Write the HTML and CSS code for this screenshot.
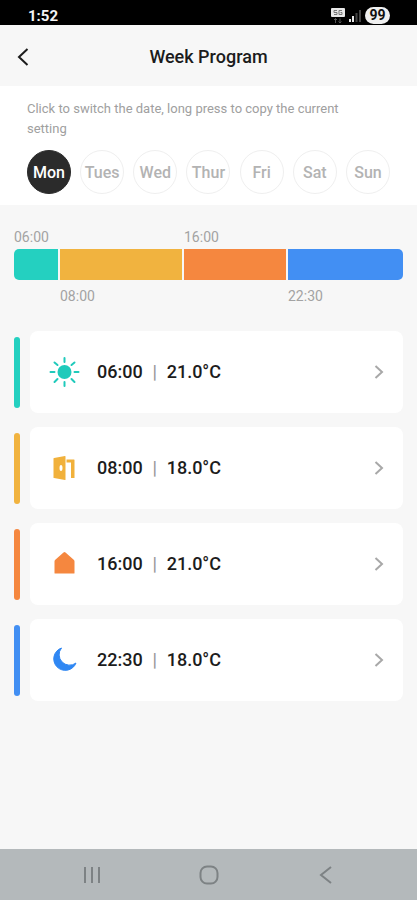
FILE: index.html
```
<!doctype html>
<html lang="en">
	<head>
		<title>Week Program</title>
		<meta charset="utf-8">
		<meta name="viewport" content="width=device-width, initial-scale=1.0">

		<link rel="stylesheet" href="styles.css">
	</head>

	<body>
		<div class="status">
			<span class="clock">1:52</span>
			<div class="status-icons">
				<svg class="network" width="14" height="16" viewBox="0 0 14 16">
					<rect x="0" y="0" width="14" height="9" rx="1" fill="#e8e8e8"/>
					<path d="M3 2.5h3M3 2.5v2h3v2H3M8 2.5v4h3v-2H9.500M8 2.500h3" fill="none" stroke="#777" stroke-width="1"/>
					<path d="M4.500 15v-4.500M3 12l1.500-1.500L6 12M9 10.500V15M7.500 13.500L9 15l1.500-1.500" fill="none" stroke="#555" stroke-width="1"/>
				</svg>
				<svg class="signal" width="12" height="12" viewBox="0 0 12 12">
					<path d="M0 9h2v3H0zM3 6h2v6H3z" fill="#e8e8e8"/>
					<path d="M6.500 3h2v9h-2zM10 0h2v12h-2z" fill="#444"/>
				</svg>
				<span class="battery">99</span>
			</div>
		</div>

		<header class="header">
			<button class="back" type="button" aria-label="Back">
				<svg width="12" height="20" viewBox="0 0 12 20"><path d="M10.500 2L2 10l8.500 8"/></svg>
			</button>
			<h1>Week Program</h1>
		</header>

		<section class="days">
			<p>Click to switch the date, long press to copy the current setting</p>
			<div class="day-list">
				<button class="day active" type="button">Mon</button>
				<button class="day" type="button">Tues</button>
				<button class="day" type="button">Wed</button>
				<button class="day" type="button">Thur</button>
				<button class="day" type="button">Fri</button>
				<button class="day" type="button">Sat</button>
				<button class="day" type="button">Sun</button>
			</div>
		</section>

		<main class="program">
			<div class="timeline">
				<span class="time">06:00</span>
				<span></span>
				<span class="time">16:00</span>
				<span></span>
				<div class="segment teal"></div>
				<div class="segment yellow"></div>
				<div class="segment orange"></div>
				<div class="segment blue"></div>
				<span></span>
				<span class="time">08:00</span>
				<span></span>
				<span class="time">22:30</span>
			</div>

			<div class="periods">
				<div class="period">
					<div class="marker teal"></div>
					<button class="card" type="button">
						<svg class="icon" width="32" height="32" viewBox="0 0 32 32">
							<circle cx="16.500" cy="16" r="7" fill="#1fcabb"/>
							<path d="M16.500 2v4M16.500 26v4M2.500 16h4M26.500 16h4M6.500 6.500l3 2.500M23.500 23l3 3M26.500 6.500l-3 2.500M9.500 23l-3 3" stroke="#1fcabb" stroke-width="2" stroke-linecap="round"/>
						</svg>
						<span class="from">06:00</span><span class="divider">|</span><span>21.0°C</span>
						<svg class="arrow" width="10" height="14" viewBox="0 0 10 14"><path d="M1.500 1l6.500 6-6.500 6"/></svg>
					</button>
				</div>
				<div class="period">
					<div class="marker yellow"></div>
					<button class="card" type="button">
						<svg class="icon" width="32" height="32" viewBox="0 0 32 32">
							<path fill-rule="evenodd" d="M6 6q-.500 0-.500.500v19q0 .500.500.500l11 2q.500 0 .500-.500V4.500q0-.500-.500-.500zM13 13q1.500 0 1.500 3t-1.500 3-1.500-3 1.500-3z" fill="#f1b13b"/>
							<path d="M18.500 7.500H26q.500 0 .500.500v18h-3.500V10.500h-4.500z" fill="#f1b13b"/>
						</svg>
						<span class="from">08:00</span><span class="divider">|</span><span>18.0°C</span>
						<svg class="arrow" width="10" height="14" viewBox="0 0 10 14"><path d="M1.500 1l6.500 6-6.500 6"/></svg>
					</button>
				</div>
				<div class="period">
					<div class="marker orange"></div>
					<button class="card" type="button">
						<svg class="icon" width="32" height="32" viewBox="0 0 32 32">
							<path d="M16.500 4q.500 0 1 .500l8.500 7.500q.500.500.500 1.500V25q0 .500-.500.500H7q-.500 0-.500-.500V13.500q0-1 .500-1.500l8.500-7.500q.500-.500 1-.500z" fill="#f5873f"/>
						</svg>
						<span class="from">16:00</span><span class="divider">|</span><span>21.0°C</span>
						<svg class="arrow" width="10" height="14" viewBox="0 0 10 14"><path d="M1.500 1l6.500 6-6.500 6"/></svg>
					</button>
				</div>
				<div class="period">
					<div class="marker blue"></div>
					<button class="card" type="button">
						<svg class="icon" width="32" height="32" viewBox="0 0 32 32">
							<path d="M13.500 4A11.500 11.500 0 1 0 28 19A10.500 10.500 0 0 1 13.500 4z" fill="#2f87f3" stroke="#2f87f3" stroke-width="1" stroke-linejoin="round"/>
						</svg>
						<span class="from">22:30</span><span class="divider">|</span><span>18.0°C</span>
						<svg class="arrow" width="10" height="14" viewBox="0 0 10 14"><path d="M1.500 1l6.500 6-6.500 6"/></svg>
					</button>
				</div>
			</div>
		</main>

		<nav class="navbar">
			<button type="button" aria-label="Recent apps">
				<svg width="18" height="18" viewBox="0 0 18 18"><path d="M2 1v16M9 1v16M16 1v16"/></svg>
			</button>
			<button type="button" aria-label="Home">
				<svg width="20" height="20" viewBox="0 0 20 20"><rect x="1.500" y="1.500" width="17" height="17" rx="6.500"/></svg>
			</button>
			<button type="button" aria-label="Back">
				<svg width="18" height="18" viewBox="0 0 18 18"><path d="M14 1L4 9l10 8"/></svg>
			</button>
		</nav>
	</body>
</html>
```
FILE: styles.css
```
* {
	box-sizing:border-box;
}

body {
	display:flex;
	flex-direction:column;
	min-height:100vh;
	margin:0;
	background:#f7f7f7;
	color:#1c1c1c;
	font-family:Roboto, "Liberation Sans", sans-serif;
}

button {
	padding:0;
	border:0;
	background:none;
	color:inherit;
	font-family:inherit;
	cursor:pointer;
}

svg {
	display:block;
	flex:none;
}

.status {
	display:flex;
	justify-content:space-between;
	align-items:flex-end;
	height:25px;
	padding:0 27px 0 28px;
	background:#000;
	color:#f4f4f4;
}

.clock {
	font-size:15px;
	font-weight:700;
	line-height:18px;
}

.status-icons {
	display:flex;
	align-items:center;
	gap:4px;
}

.battery {
	width:25px;
	margin-bottom:1px;
	border-radius:9px;
	background:#f0f0f0;
	color:#111;
	font-size:14px;
	font-weight:700;
	line-height:17px;
	text-align:center;
}

.header {
	display:grid;
	grid-template-columns:40px 1fr 40px;
	align-items:center;
	height:61px;
	padding-top:2px;
}

.back {
	display:flex;
	justify-content:flex-end;
	width:29px;
	padding:8px 0;
}

.back path {
	fill:none;
	stroke:#1c1c1c;
	stroke-width:2;
}

.header h1 {
	margin:0;
	font-size:18px;
	font-weight:500;
	line-height:24px;
	text-align:center;
}

.days {
	padding:13px 27px 11px;
	background:#fff;
}

.days p {
	margin:0 0 11px;
	padding-right:16px;
	color:#a0a0a0;
	font-size:13px;
	line-height:20px;
}

.day-list {
	display:flex;
	justify-content:space-between;
}

.day {
	width:44px;
	height:44px;
	border:1px solid #efefef;
	border-radius:50%;
	color:#b3b3b3;
	font-size:16px;
	font-weight:500;
}

.day.active {
	border-color:#2b2b2b;
	background:#2b2b2b;
	color:#fff;
}

.program {
	flex:1;
	padding:24px 14px;
}

.timeline {
	display:grid;
	grid-template-columns:44fr 122fr 102fr 115fr;
	gap:4px 2px;
}

.time {
	width:0;
	color:#a3a3a3;
	font-size:14px;
	line-height:16px;
	white-space:nowrap;
}

.segment {
	height:31px;
}

.segment.teal {
	border-radius:5px 0 0 5px;
}

.segment.blue {
	border-radius:0 5px 5px 0;
}

.segment ~ .time {
	padding-top:4px;
}

.teal {
	background:#24d0c0;
}

.yellow {
	background:#f1b33f;
}

.orange {
	background:#f5873f;
}

.blue {
	background:#428ff3;
}

.periods {
	display:grid;
	gap:14px;
	margin-top:27px;
}

.period {
	display:flex;
	align-items:center;
	gap:10px;
}

.marker {
	width:6px;
	height:71px;
	border-radius:3px;
}

.card {
	display:flex;
	flex:1;
	align-items:center;
	height:82px;
	padding:0 19px 0 18px;
	border-radius:8px;
	background:#fff;
	font-size:18px;
	font-weight:500;
	line-height:24px;
}

.from {
	margin-left:17px;
}

.divider {
	width:24px;
	color:#9a9a9a;
	text-align:center;
}

.arrow {
	margin-left:auto;
}

.arrow path {
	fill:none;
	stroke:#a8a8a8;
	stroke-width:2;
}

.navbar {
	display:grid;
	grid-template-columns:repeat(3, 117px);
	justify-content:center;
	height:51px;
	background:#b4b9bb;
}

.navbar button {
	display:flex;
	justify-content:center;
	align-items:center;
}

.navbar path,
.navbar rect {
	fill:none;
	stroke:#7d8284;
	stroke-width:2;
}
```
